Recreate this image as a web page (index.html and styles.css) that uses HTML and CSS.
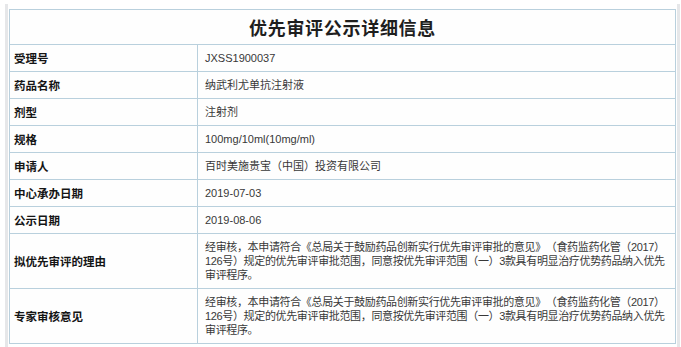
FILE: index.html
```html
<!DOCTYPE html>
<html lang="zh-CN">
<head>
<meta charset="utf-8">
<title>优先审评公示详细信息</title>
<link rel="stylesheet" href="styles.css">
</head>
<body>
<div class="frame">
  <table class="info">
    <colgroup>
      <col class="col-label">
      <col class="col-value">
    </colgroup>
    <tr class="title-row">
      <th colspan="2" class="title">优先审评公示详细信息</th>
    </tr>
    <tr>
      <td class="label">受理号</td>
      <td class="value">JXSS1900037</td>
    </tr>
    <tr>
      <td class="label">药品名称</td>
      <td class="value">纳武利尤单抗注射液</td>
    </tr>
    <tr>
      <td class="label">剂型</td>
      <td class="value">注射剂</td>
    </tr>
    <tr>
      <td class="label">规格</td>
      <td class="value">100mg/10ml(10mg/ml)</td>
    </tr>
    <tr>
      <td class="label">申请人</td>
      <td class="value">百时美施贵宝（中国）投资有限公司</td>
    </tr>
    <tr>
      <td class="label">中心承办日期</td>
      <td class="value">2019-07-03</td>
    </tr>
    <tr>
      <td class="label">公示日期</td>
      <td class="value">2019-08-06</td>
    </tr>
    <tr class="tall">
      <td class="label">拟优先审评的理由</td>
      <td class="value long">经审核，本申请符合《总局关于鼓励药品创新实行优先审评审批的意见》（食药监药化管（2017）126号）规定的优先审评审批范围，同意按优先审评范围（一）3款具有明显治疗优势药品纳入优先审评程序。</td>
    </tr>
    <tr class="tall">
      <td class="label">专家审核意见</td>
      <td class="value long">经审核，本申请符合《总局关于鼓励药品创新实行优先审评审批的意见》（食药监药化管（2017）126号）规定的优先审评审批范围，同意按优先审评范围（一）3款具有明显治疗优势药品纳入优先审评程序。</td>
    </tr>
  </table>
</div>
</body>
</html>
```

FILE: styles.css
```css
html, body {
  margin: 0;
  padding: 0;
  background: #ffffff;
}

body {
  font-family: "Liberation Sans", "Noto Sans CJK SC", sans-serif;
  color: #333333;
}

.frame {
  margin: 4px 1px 0 5px;
  padding: 5px 1px 0 1px;
  border-left: 3px solid #e6e7e9;
  border-right: 3px solid #e6e7e9;
  height: 343px;
  box-sizing: border-box;
}

.info {
  width: 100%;
  border-collapse: collapse;
  background: #fefefe;
  table-layout: fixed;
}

.col-label {
  width: 188px;
}

.info th,
.info td {
  border: 1px solid #b9d0dd;
  padding: 0;
}

.title {
  height: 34px;
  font-family: "Noto Sans CJK SC", sans-serif;
  font-size: 18px;
  font-weight: 700;
  letter-spacing: 0.7px;
  color: #1e1e1e;
  text-align: center;
  vertical-align: middle;
  line-height: 20px;
}

.info td {
  height: 26px;
  vertical-align: middle;
  line-height: 14px;
}

.label {
  padding-left: 4px !important;
  font-family: "Noto Sans CJK SC", sans-serif;
  font-size: 11.5px;
  font-weight: 700;
  color: #151515;
}

.value {
  padding-left: 7px !important;
  padding-right: 6px !important;
  font-size: 11px;
  color: #383838;
  text-spacing-trim: space-all;
}

.tall td {
  height: 54px;
}

.long {
  letter-spacing: -0.35px;
  line-height: 12.5px;
}
```
